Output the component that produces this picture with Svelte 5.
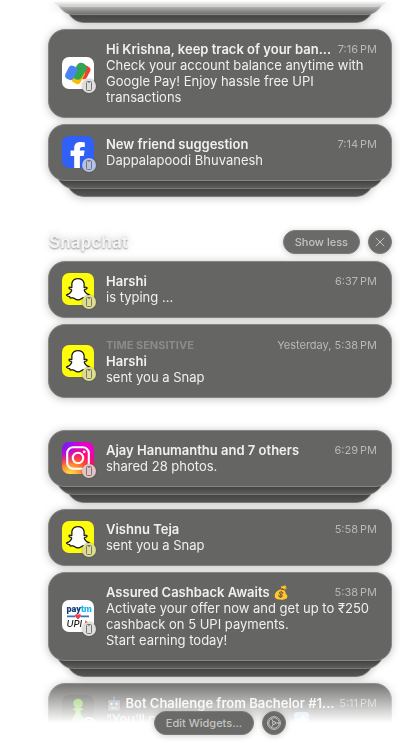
<script>
  const recent = [
    {
      icon: 'gpay',
      tint: '#dededc',
      title: 'Hi Krishna, keep track of your ban...',
      time: '7:16\u202fPM',
      body: 'Check your account balance anytime with\nGoogle Pay! Enjoy hassle free UPI\ntransactions'
    },
    {
      icon: 'facebook',
      tint: '#b4c2e4',
      title: 'New friend suggestion',
      time: '7:14\u202fPM',
      body: 'Dappalapoodi Bhuvanesh',
      stacked: true
    }
  ];

  const snapchat = [
    { icon: 'snapchat', tint: '#dedd8c', title: 'Harshi', time: '6:37\u202fPM', body: 'is typing ...' },
    {
      icon: 'snapchat',
      tint: '#dedd8c',
      label: 'TIME SENSITIVE',
      title: 'Harshi',
      time: 'Yesterday, 5:38\u202fPM',
      body: 'sent you a Snap'
    }
  ];

  const earlier = [
    {
      icon: 'instagram',
      tint: '#e3c3c6',
      title: 'Ajay Hanumanthu and 7 others',
      time: '6:29\u202fPM',
      body: 'shared 28 photos.',
      stacked: true
    },
    { icon: 'snapchat', tint: '#dedd8c', title: 'Vishnu Teja', time: '5:58\u202fPM', body: 'sent you a Snap' },
    {
      icon: 'paytm',
      tint: '#dededc',
      title: 'Assured Cashback Awaits 💰',
      time: '5:38\u202fPM',
      body: 'Activate your offer now and get up to ₹250\ncashback on 5 UPI payments.\nStart earning today!',
      stacked: true
    },
    {
      icon: 'chess',
      tint: '#ffffff',
      title: '🤖 Bot Challenge from Bachelor #1...',
      time: '5:11\u202fPM',
      body: '“You’ll n',
      arrow: true,
      stacked: true
    }
  ];
</script>

{#snippet appIcon(name)}
  <svg class="app" viewBox="0 0 32 32" aria-hidden="true">
    {#if name === 'gpay'}
      <rect width="32" height="32" rx="7" fill="#fff" />
      <rect x="18.6" y="8.6" width="8.4" height="13.6" rx="3.6" fill="#ea4335" transform="rotate(28 22.8 15.4)" />
      <rect x="11.6" y="11.4" width="9.6" height="15.6" rx="3.8" fill="#fbbc04" transform="rotate(28 16.4 19.2)" />
      <rect x="12.2" y="5.4" width="10.4" height="17.6" rx="4.4" fill="#2fa650" transform="rotate(32 17.4 14.2)" />
      <rect x="4.6" y="8.6" width="9.2" height="14.4" rx="3.8" fill="#4a84f0" transform="rotate(26 9.2 15.8)" />
    {:else if name === 'facebook'}
      <rect width="32" height="32" rx="7" fill="#3160f6" />
      <path
        fill="#fff"
        d="M12.2 32V20H8.6v-5.4h3.6v-2.4C12.2 8 14.4 6 18.4 6c1.6 0 3.4.2 4.4.5v4.6h-2.4c-1.9 0-2.5.9-2.5 2.2v1.3h4.7l-.9 5.4h-3.8v12z"
      />
    {:else if name === 'snapchat'}
      <rect width="32" height="32" rx="7" fill="#fdfc0a" />
      <path
        transform="translate(4.6 4.9) scale(.95)"
        fill="#fff"
        stroke="#111"
        stroke-width="1.3"
        stroke-linejoin="round"
        d="M12.206.793c.99 0 4.347.276 5.93 3.821.529 1.193.403 3.219.299 4.847l-.003.06c-.012.18-.022.345-.03.51.075.045.203.09.401.09.3-.016.659-.12 1.033-.301.165-.088.344-.104.464-.104.182 0 .359.029.509.09.45.149.734.479.734.838.015.449-.39.839-1.213 1.168-.089.029-.209.075-.344.119-.45.135-1.139.36-1.333.81-.09.224-.061.524.12.868l.015.015c.06.136 1.526 3.475 4.791 4.014.255.044.435.27.42.509 0 .075-.015.149-.045.225-.24.569-1.273.988-3.146 1.271-.059.091-.12.375-.164.57-.029.179-.074.36-.134.553-.076.271-.27.405-.555.405h-.03c-.135 0-.313-.031-.538-.074-.36-.075-.765-.135-1.273-.135-.3 0-.599.015-.913.074-.6.104-1.123.464-1.723.884-.853.599-1.826 1.288-3.294 1.288-.06 0-.119-.015-.18-.015h-.149c-1.468 0-2.427-.675-3.279-1.288-.599-.42-1.107-.779-1.707-.884-.314-.045-.629-.074-.928-.074-.54 0-.958.089-1.272.149-.211.043-.391.074-.54.074-.374 0-.523-.224-.583-.42-.061-.192-.09-.389-.135-.567-.046-.181-.105-.494-.166-.57-1.918-.222-2.95-.642-3.189-1.226-.031-.063-.052-.15-.055-.225-.015-.243.165-.465.42-.509 3.264-.54 4.73-3.879 4.791-4.02l.016-.029c.18-.345.224-.645.119-.869-.195-.434-.884-.658-1.332-.809-.121-.029-.24-.074-.346-.119-1.107-.435-1.257-.93-1.197-1.273.09-.479.674-.793 1.168-.793.146 0 .27.029.383.074.42.194.789.3 1.104.3.234 0 .384-.06.465-.105l-.046-.569c-.098-1.626-.225-3.651.307-4.837C7.392 1.077 10.739.807 11.727.807l.419-.015h.06z"
      />
    {:else if name === 'instagram'}
      <defs>
        <radialGradient id="ig-warm" cx=".27" cy="1.05" r="1">
          <stop offset="0" stop-color="#fd5" />
          <stop offset=".15" stop-color="#ffc93d" />
          <stop offset=".5" stop-color="#ff5a2c" />
          <stop offset=".75" stop-color="#ff0f6c" />
          <stop offset="1" stop-color="#e800c4" />
        </radialGradient>
        <radialGradient id="ig-cool" cx="0" cy="0" r=".75">
          <stop offset="0" stop-color="#5a1cff" />
          <stop offset=".4" stop-color="#8a14ff" stop-opacity=".8" />
          <stop offset="1" stop-color="#c800e8" stop-opacity="0" />
        </radialGradient>
      </defs>
      <rect width="32" height="32" rx="7" fill="url(#ig-warm)" />
      <rect width="32" height="32" rx="7" fill="url(#ig-cool)" />
      <g fill="none" stroke="#fff" stroke-width="2.1">
        <rect x="5.2" y="5.2" width="21.6" height="21.6" rx="6" />
        <circle cx="16" cy="16" r="5.2" />
      </g>
      <circle cx="22.2" cy="9.8" r="1.4" fill="#fff" />
    {:else if name === 'paytm'}
      <rect width="32" height="32" rx="7" fill="#fff" />
      <text x="4.5" y="12" font-family="Roboto, sans-serif" font-size="9" font-weight="900" fill="#123a7c"
        >pay<tspan fill="#18b4f0">tm</tspan></text
      >
      <path d="M5 16.4h8M19 16.4h8" stroke="#2d74c4" stroke-width="1.8" />
      <path d="M16 18.8c-4.600-2.800-2.400-5.600 0-3.600 2.400-2 4.600.8 0 3.600z" fill="#ef4048" stroke="#ef4048" stroke-width=".9" />
      <text x="4.5" y="26.500" font-family="Inter, sans-serif" font-size="9.500" font-style="italic" font-weight="500" fill="#222">UPI</text>
      <path d="M23.400 20l3.600 3.500-4.400 3z" fill="#ed752e" />
    {:else}
      <rect width="32" height="32" rx="7" fill="#555552" />
      <path d="M12.600 13h6.800l2 1.500-3 1.300c.3 4 2 6.500 4.600 9.200V29H9v-4c2.600-2.700 4.300-5.200 4.600-9.200l-3-1.300z" fill="#8ed45c" />
      <circle cx="16" cy="8.500" r="4.800" fill="#81c44e" />
    {/if}
  </svg>
{/snippet}

{#snippet layers()}
  <div class="layer near"></div>
  <div class="layer far"></div>
{/snippet}

{#snippet card(n)}
  <li>
    <article class="card">
      <div class="icon">
        {@render appIcon(n.icon)}
        <span class="badge" style:background={n.tint}>
          <svg viewBox="0 0 14 14" aria-hidden="true">
            <rect x="4.500" y="2.500" width="5" height="9" rx="1" fill="none" stroke="#777" />
            <path d="M6 3.200h2" stroke="#777" />
          </svg>
        </span>
      </div>
      <div class="content">
        {#if n.label}
          <div class="row label">
            <span>{n.label}</span>
            <time>{n.time}</time>
          </div>
          <h3>{n.title}</h3>
        {:else}
          <div class="row">
            <h3>{n.title}</h3>
            <time>{n.time}</time>
          </div>
        {/if}
        <div class="row">
          <p>{n.body}</p>
          {#if n.arrow}
            <svg class="arrow" viewBox="0 0 15 15" aria-hidden="true">
              <rect width="15" height="15" rx="3" fill="#a8cbee" />
              <path d="M3 7.500h8M8 4l3.500 3.500L8 11" fill="none" stroke="#fff" stroke-width="2" />
            </svg>
          {/if}
        </div>
      </div>
    </article>
    {#if n.stacked}{@render layers()}{/if}
  </li>
{/snippet}

<main>
  <div class="list">
    <div class="tail">
      <div class="card edge"></div>
      {@render layers()}
    </div>

    <ul>
      {#each recent as n}{@render card(n)}{/each}
    </ul>

    <section>
      <header>
        <h2>Snapchat</h2>
        <button class="pill">Show less</button>
        <button class="pill round" aria-label="Clear all">
          <svg viewBox="0 0 24 24" aria-hidden="true">
            <path d="M8 8l8 8M16 8l-8 8" />
          </svg>
        </button>
      </header>
      <ul>
        {#each snapchat as n}{@render card(n)}{/each}
      </ul>
    </section>

    <ul>
      {#each earlier as n}{@render card(n)}{/each}
    </ul>
  </div>

  <footer>
    <button class="pill">Edit Widgets...</button>
    <button class="pill round" aria-label="Notification settings">
      <svg viewBox="0 0 24 24" aria-hidden="true">
        <circle cx="12" cy="12" r="5.300" />
        <circle cx="12" cy="12" r="6.500" stroke-width="1" stroke-dasharray="1 1.040" />
        <circle cx="12" cy="12" r="1.500" />
        <path d="M13.500 12h4M11.200 10.700L9.300 7.400M11.200 13.300l-1.900 3.300" />
      </svg>
    </button>
  </footer>
</main>

<style>
  :global(body) {
    background: #fff;
  }

  main {
    position: relative;
    height: 100vh;
    overflow: hidden;
    font-family: Inter, 'Liberation Sans', 'Noto Color Emoji', sans-serif;
    font-size: 13px;
    line-height: 16px;
    color: #f0f0ef;
  }

  .list {
    box-sizing: border-box;
    height: 100%;
    overflow: hidden;
    padding: 0 16px 0 48px;
    display: flex;
    flex-direction: column;
    mask-image: linear-gradient(
      to bottom,
      transparent 1px,
      #000 16px,
      #000 calc(100% - 64px),
      transparent calc(100% - 20px)
    );
  }

  .list > * {
    flex: none;
  }

  ul {
    list-style: none;
    margin: 0;
    padding: 0;
    display: flex;
    flex-direction: column;
    gap: 6px;
  }

  .tail {
    margin-top: -50px;
    margin-bottom: 6px;
  }

  section {
    padding: 33px 0 32px;
  }

  h2,
  h3,
  p {
    margin: 0;
    font-size: inherit;
  }

  .card {
    position: relative;
    z-index: 2;
    box-sizing: border-box;
    display: flex;
    align-items: center;
    gap: 12px;
    padding: 11px 14px 12px 13px;
    border: 1px solid #858583;
    border-radius: 17px;
    background: #656563;
    box-shadow: 0 1px 9px rgb(0 0 0 / 25%);
  }

  .edge {
    height: 57px;
  }

  .layer {
    position: relative;
    box-sizing: border-box;
    height: 24px;
    margin-top: -16px;
    border: 1px solid #7b7b79;
    border-radius: 0 0 18px 18px;
  }

  .near {
    z-index: 1;
    margin-inline: 8px;
    background: linear-gradient(#4c4c4a 65%, #60605e);
  }

  .far {
    margin-inline: 18px;
    background: linear-gradient(#444442 65%, #545452);
    box-shadow: 0 1px 8px rgb(0 0 0 / 25%);
  }

  .icon {
    position: relative;
    flex: none;
    width: 32px;
    height: 32px;
  }

  .app {
    display: block;
    width: 100%;
    height: 100%;
  }

  .badge {
    position: absolute;
    right: -2px;
    bottom: -4px;
    width: 14px;
    height: 14px;
    border-radius: 50%;
    box-shadow: 0 0 2px rgb(0 0 0 / 30%);
  }

  .badge svg {
    display: block;
    width: 14px;
    height: 14px;
  }

  .content {
    flex: 1;
    min-width: 0;
  }

  .row {
    display: flex;
    align-items: center;
    justify-content: space-between;
  }

  .row.label {
    height: 17px;
    font-size: 11px;
    font-weight: 700;
    color: #8b8b89;
  }

  h3 {
    font-weight: 600;
    white-space: nowrap;
  }

  p {
    white-space: pre-line;
  }

  time {
    flex: none;
    font-size: 11px;
    font-weight: 400;
    color: #b8b8b7;
  }

  .arrow {
    width: 15px;
    height: 15px;
    margin-right: 68px;
  }

  header {
    display: flex;
    align-items: center;
    gap: 8px;
    margin-bottom: 7px;
  }

  h2 {
    flex: 1;
    padding-left: 1px;
    font-size: 17px;
    line-height: 24px;
    font-weight: 700;
    color: #f4f4f4;
    text-shadow:
      0 1px 2px rgb(0 0 0 / 40%),
      0 0 10px rgb(0 0 0 / 20%);
  }

  .pill {
    box-sizing: border-box;
    height: 24px;
    padding: 0 11px;
    border: 1px solid #7b7b79;
    border-radius: 12px;
    background: #6a6a68;
    box-shadow: 0 1px 6px rgb(0 0 0 / 20%);
    font: 500 11px/16px Inter, 'Liberation Sans', sans-serif;
    color: #c4c4c3;
  }

  .round {
    width: 24px;
    padding: 0;
  }

  .round svg {
    display: block;
    width: 24px;
    height: 24px;
    margin: -1px;
    fill: none;
    stroke: #c4c4c3;
    stroke-width: 1;
    stroke-linecap: round;
  }

  footer {
    position: absolute;
    z-index: 3;
    right: 16px;
    bottom: 8px;
    left: 48px;
    display: flex;
    justify-content: center;
    gap: 8px;
  }
</style>
